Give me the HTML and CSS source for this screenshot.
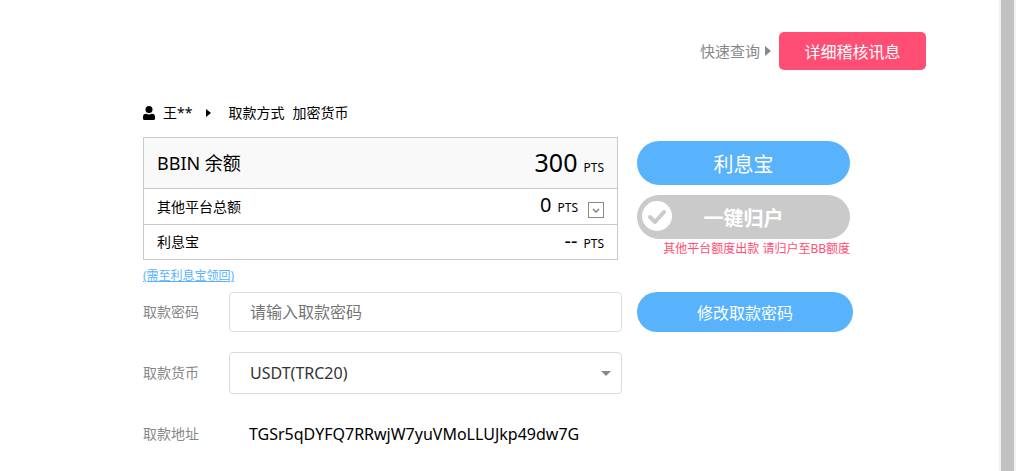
FILE: index.html
```html
<!DOCTYPE html>
<html lang="zh-CN">
<head>
    <meta charset="UTF-8">
    <meta name="viewport" content="width=device-width, initial-scale=1.0">
    <title>取款</title>
    <link rel="stylesheet" href="styles.css">
</head>
<body>
    <main class="page">
        <header class="top">
            <span class="quick">快速查询</span>
            <svg class="quick-arrow" width="6" height="10" viewBox="0 0 6 10"><path d="M0 0L6 5L0 10Z" fill="currentColor"/></svg>
            <button type="button" class="btn-audit">详细稽核讯息</button>
        </header>

        <div class="content">
            <div class="crumb">
                <svg class="user-icon" width="12" height="14" viewBox="0 0 12 14"><circle cx="6" cy="3.5" r="3.5"/><path d="M0 12.5V11Q0 7.8 3 7.8Q6 9.2 9 7.8Q12 7.8 12 11V12.5Q12 14 10.5 14H1.5Q0 14 0 12.5Z"/></svg>
                <span class="user-name">王**</span>
                <svg class="crumb-arrow" width="5" height="8" viewBox="0 0 5 8"><path d="M0 0L5 4L0 8Z"/></svg>
                <span class="method">取款方式</span>
                <span>加密货币</span>
            </div>

            <div class="account">
                <div class="balance-box">
                    <table class="balance">
                        <tr class="main-row">
                            <th scope="row">BBIN 余额</th>
                            <td><div class="amount"><span class="num">300</span><span class="unit">PTS</span></div></td>
                        </tr>
                        <tr>
                            <th scope="row">其他平台总额</th>
                            <td>
                                <div class="amount">
                                    <span class="num">0</span><span class="unit">PTS</span>
                                    <button type="button" class="btn-more" aria-label="展开">
                                        <svg width="8" height="5" viewBox="0 0 8 5"><path d="M1 1L4 4L7 1" fill="none" stroke="#888" stroke-width="1.6"/></svg>
                                    </button>
                                </div>
                            </td>
                        </tr>
                        <tr class="last-row">
                            <th scope="row">利息宝</th>
                            <td><div class="amount"><span class="num">--</span><span class="unit">PTS</span></div></td>
                        </tr>
                    </table>
                    <a href="#" class="claim">(需至利息宝领回)</a>
                </div>

                <div class="actions">
                    <button type="button" class="btn-pill">利息宝</button>
                    <button type="button" class="btn-pill btn-gray">
                        <svg class="check" width="30" height="30" viewBox="0 0 30 30"><circle cx="15" cy="15" r="15" fill="#fff"/><path d="M8 16L13 21L22 11" fill="none" stroke="#cacaca" stroke-width="4" stroke-linecap="round" stroke-linejoin="round"/></svg>
                        一键归户
                    </button>
                    <p class="note">其他平台额度出款 请归户至BB额度</p>
                </div>
            </div>

            <form class="withdraw">
                <div class="row">
                    <label for="password">取款密码</label>
                    <input type="password" id="password" class="field" placeholder="请输入取款密码">
                    <button type="button" class="btn-pill btn-password">修改取款密码</button>
                </div>
                <div class="row">
                    <label for="currency">取款货币</label>
                    <div class="select-box">
                        <select id="currency" class="field">
                            <option>USDT(TRC20)</option>
                        </select>
                    </div>
                </div>
                <div class="row">
                    <label for="address">取款地址</label>
                    <output id="address" class="address">TGSr5qDYFQ7RRwjW7yuVMoLLUJkp49dw7G</output>
                </div>
            </form>
        </div>
    </main>
    <div class="scrollbar"><div class="thumb"></div></div>
</body>
</html>
```
FILE: styles.css
```css
* {
    box-sizing: border-box;
}

body {
    margin: 0;
    display: flex;
    min-height: 100vh;
    background-color: #fff;
    color: #000;
    font-family: "Noto Sans", "Noto Sans CJK SC", sans-serif;
    font-size: 14px;
    line-height: 20px;
}

button, input, select {
    font-family: inherit;
}

button {
    border: none;
    padding: 0;
    cursor: pointer;
}

.page {
    flex: 1;
    min-width: 0;
}

.top {
    display: flex;
    align-items: center;
    justify-content: flex-end;
    padding: 32px 73px 0 0;
    color: #888;
}

.quick {
    font-size: 15px;
}

.quick-arrow {
    margin: 0 8px 0 5px;
}

.btn-audit {
    width: 147px;
    height: 38px;
    border-radius: 5px;
    background-color: #ff4d73;
    color: #fff;
    font-size: 16px;
}

.content {
    max-width: 713px;
    margin: 33px auto 0;
}

.crumb {
    display: flex;
    align-items: center;
}

.user-name {
    margin-left: 8px;
}

.crumb-arrow {
    margin: 0 17px 0 14px;
}

.method {
    margin-right: 8px;
}

.account {
    display: flex;
    gap: 19px;
    margin-top: 14px;
}

.balance-box {
    flex: 0 1 475px;
}

.balance {
    width: 100%;
    border-collapse: collapse;
}

.balance tr {
    height: 36px;
    border: 1px solid #cacaca;
}

.balance .main-row {
    height: 51px;
    background-color: #f9f9f9;
    font-size: 18px;
}

.balance .last-row {
    height: 35px;
}

.balance th {
    padding: 0 13px;
    font-weight: normal;
    text-align: left;
}

.balance td {
    padding: 0 13px;
}

.balance .main-row td {
    padding-top: 4px;
}

.amount {
    display: flex;
    align-items: baseline;
    justify-content: flex-end;
}

.num {
    font-size: 20px;
}

.main-row .num {
    font-size: 25px;
}

.unit {
    margin-left: 6px;
    font-size: 12px;
}

.btn-more {
    display: flex;
    align-items: center;
    justify-content: center;
    align-self: flex-end;
    width: 16px;
    height: 16px;
    margin-left: 10px;
    border: 1px solid #888;
    background-color: #fff;
}

.claim {
    display: block;
    margin-top: 6px;
    color: #58b3fc;
    font-size: 12px;
}

.actions {
    flex: 0 0 213px;
    padding-top: 4px;
}

.btn-pill {
    position: relative;
    display: block;
    width: 100%;
    height: 44px;
    border-radius: 22px;
    background-color: #58b3fc;
    color: #fff;
    font-size: 20px;
}

.btn-gray {
    margin-top: 10px;
    background-color: #cacaca;
    font-weight: bold;
}

.check {
    position: absolute;
    top: 6px;
    left: 5px;
}

.note {
    margin: 0;
    color: #ff4d73;
    font-size: 12px;
    text-align: right;
    white-space: nowrap;
}

.withdraw {
    display: grid;
    gap: 20px;
    margin-top: 6px;
}

.row {
    display: grid;
    grid-template-columns: 86px minmax(0, 393px) 216px;
    align-items: center;
}

.row label {
    color: #888;
}

.field {
    width: 100%;
    height: 40px;
    padding: 0 20px;
    border: 1px solid #dcdcdc;
    border-radius: 4px;
    background-color: #fff;
    color: #333;
    font-size: 16px;
}

.field::placeholder {
    color: #757575;
}

.btn-password {
    height: 40px;
    margin-left: 15px;
    font-size: 16px;
}

.select-box {
    position: relative;
}

.select-box .field {
    display: block;
    height: 42px;
    appearance: none;
}

.select-box::after {
    content: "";
    position: absolute;
    top: 19px;
    right: 11px;
    border: 5px solid transparent;
    border-top-color: #888;
    border-bottom: none;
    pointer-events: none;
}

.address {
    padding: 10px 20px;
    font-size: 16px;
}

.scrollbar {
    flex: 0 0 17px;
    padding: 0 2px;
    background-color: #f1f1f1;
}

.thumb {
    height: 100%;
    background-color: #c1c1c1;
}
```
